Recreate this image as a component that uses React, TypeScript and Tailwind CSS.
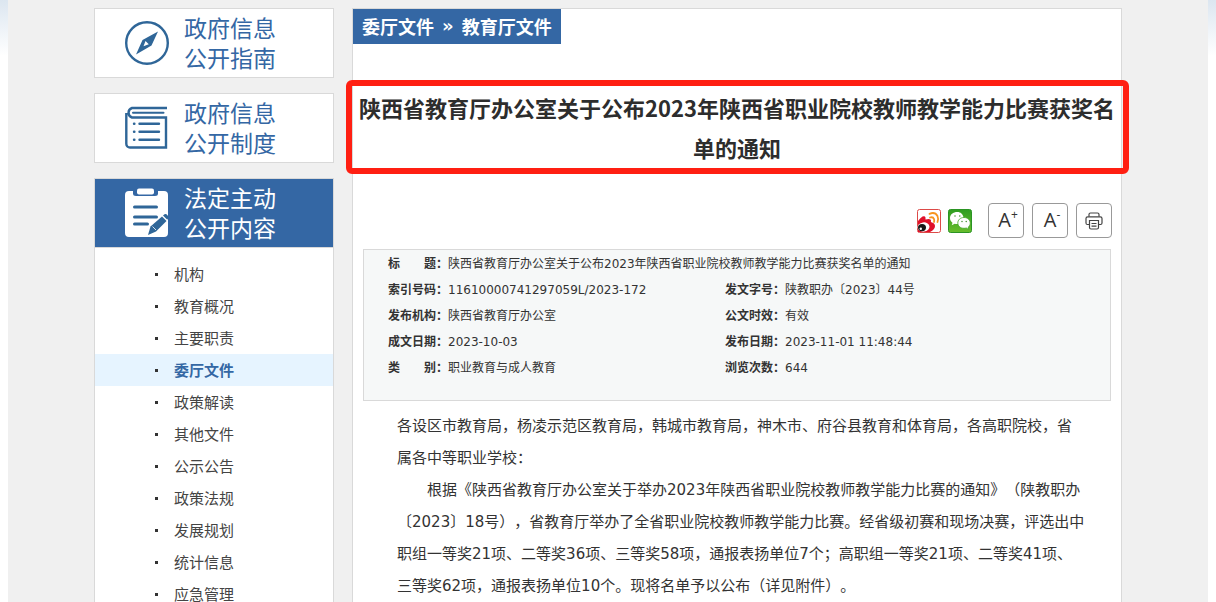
import React from "react";

const menu = [
  "机构",
  "教育概况",
  "主要职责",
  "委厅文件",
  "政策解读",
  "其他文件",
  "公示公告",
  "政策法规",
  "发展规划",
  "统计信息",
  "应急管理",
];
const current = "委厅文件";

function CompassIcon() {
  return (
    <svg viewBox="0 0 44 44" className="size-11" fill="none" aria-hidden="true">
      <circle cx="22" cy="22" r="20.8" stroke="#2f6698" strokeWidth="2.4" />
      <path
        fillRule="evenodd"
        fill="#2f6698"
        d="M33 10.500 26.500 24.500 11 33.500 17.500 19ZM20.500 20 18.500 25.200 23.800 23.200Z"
      />
    </svg>
  );
}

function BookIcon() {
  return (
    <svg viewBox="0 0 44 44" className="size-11" fill="none" stroke="#2f6698" strokeWidth="2.4" aria-hidden="true">
      <path d="M42 2H7A5 5 0 0 0 7 11.500H41V41.500H5A3.800 3.800 0 0 1 1.300 37.700V7" />
      <path d="M8 6.800H38.500" strokeLinecap="round" strokeWidth="2" />
      <path d="M14.500 17.800H34M14.500 25.800H34M14.500 33.800H34" strokeLinecap="round" />
      <path d="M9 17.800H9.400M9 25.800H9.400M9 33.800H9.400" strokeLinecap="round" />
    </svg>
  );
}

function ClipboardIcon() {
  return (
    <svg viewBox="0 0 44 50" className="h-[50px] w-11" aria-hidden="true">
      <path
        fill="#fff"
        d="M4 3H8V5.500Q8 8 11 8H30Q33 8 33 5.500V3H39Q43 3 43 7V45Q43 49 39 49H4Q0 49 0 45V7Q0 3 4 3Z"
      />
      <rect x="12" y="0.500" width="17" height="6" rx="2" fill="#fff" />
      <path d="M9.500 19H31.500M9.500 29H31.500M9.500 36H22.500" stroke="#2f6698" strokeWidth="3" strokeLinecap="round" />
      <path d="M23 47 25.500 38.500 37 28.500 41.500 33 31 43.500Z" fill="#2f6698" />
      <path d="M38 27.500 39.500 26.300Q41 25.600 42.500 27.200T43 30.500L42.300 31.800Z" fill="#2f6698" />
      <path d="M27.500 38.500 31 42" stroke="#fff" strokeWidth="0.800" />
    </svg>
  );
}

function WeiboIcon() {
  return (
    <svg viewBox="0 0 24 24" className="size-6" aria-hidden="true">
      <rect x="0.5" y="0.5" width="23" height="23" rx="2" fill="#fff" stroke="#dc4a48" />
      <path
        d="M1 12Q3 9 5.500 7.500 8 6.500 8.500 8.500L8.500 10.500Q12 9.500 13.500 10.500 14.500 11.500 13.800 13 18 14 18 17 18 20.500 13 23H1Z"
        fill="#e0102a"
      />
      <ellipse cx="6.500" cy="18" rx="6" ry="4.600" fill="#fff" transform="rotate(-8 6.500 18)" />
      <ellipse cx="5" cy="18.600" rx="4" ry="3.600" fill="#181818" />
      <circle cx="3.800" cy="19.800" r="1.200" fill="#fff" />
      <path
        d="M12.500 4.800Q18 2.500 20.500 7 21.800 10 20.500 13M13 8.500Q16 7.500 17 10 17.500 11.500 17 13"
        fill="none"
        stroke="#f7941d"
        strokeWidth="1.800"
        strokeLinecap="round"
      />
    </svg>
  );
}

function WechatIcon() {
  return (
    <svg viewBox="0 0 24 24" className="size-6" aria-hidden="true">
      <defs>
        <linearGradient id="wechatGreen" x1="0" y1="0" x2="0" y2="1">
          <stop offset="0" stopColor="#2f9d22" />
          <stop offset="1" stopColor="#68bd2c" />
        </linearGradient>
      </defs>
      <rect x="0.5" y="0.5" width="23" height="23" rx="2" fill="url(#wechatGreen)" stroke="#2b9424" />
      <path
        d="M9.500 3C5 3 2 5.600 2 9 2 11 3 12.600 4.500 13.700L3.700 16.300 6.700 14.800Q8 15.200 10 15.100L15.500 8.500C15 5.200 12.500 3 9.500 3Z"
        fill="#fff"
      />
      <path
        d="M16 8.500C12.200 8.500 9.800 11 9.800 14 9.800 17 12.400 19.300 16 19.300Q17.200 19.300 18.300 19L20.700 20.500 20.200 18.200C21.600 17.200 22.300 15.700 22.300 14 22.300 11 19.700 8.500 16 8.500Z"
        fill="#fff"
        stroke="#40a626"
        strokeWidth="0.800"
      />
      <g fill="#31851f">
        <circle cx="7" cy="7" r="0.700" />
        <circle cx="11.800" cy="7" r="0.700" />
        <circle cx="14" cy="12.500" r="0.700" />
        <circle cx="18.200" cy="12.500" r="0.700" />
      </g>
    </svg>
  );
}

function PrinterIcon() {
  return (
    <svg viewBox="0 0 18 18" className="size-[18px]" fill="none" stroke="#444" strokeWidth="1.200" aria-hidden="true">
      <path d="M4 4.500V2.500Q4 1 5.500 1H12.500Q14 1 14 2.500V4.500" />
      <path d="M4.500 12.500H2.500Q1 12.500 1 11V6.500Q1 4.800 2.700 4.800H15.300Q17 4.800 17 6.500V11Q17 12.500 15.500 12.500H13.500" />
      <path d="M4.500 8.500H13.500V15.500Q13.500 17 12 17H6Q4.500 17 4.500 15.500Z" />
      <path d="M6.500 11.500H11.500M6.500 14.200H11.500" />
    </svg>
  );
}

type CardProps = { icon: React.ReactNode; lines: [string, string]; active?: boolean };

function SideCard({ icon, lines, active = false }: CardProps) {
  return (
    <a
      href="#"
      className={
        active
          ? "flex h-[70px] items-center gap-[15px] border border-[#d9d9d9] bg-[#3467a4] pl-[30px] text-white"
          : "flex h-[70px] items-center gap-[15px] border border-[#d9d9d9] bg-white pl-[30px] text-[#3467a4]"
      }
    >
      {icon}
      <span className="pb-0.5 text-[23px] leading-[30px]">
        {lines[0]}
        <br />
        {lines[1]}
      </span>
    </a>
  );
}

function Field({ label, value, wide = false }: { label: string; value: string; wide?: boolean }) {
  return (
    <div className={wide ? "col-span-2 flex" : "flex"}>
      <dt className="w-[60px] shrink-0 font-bold whitespace-pre">{label}：</dt>
      <dd>{value}</dd>
    </div>
  );
}

const toolButton =
  "flex h-[35px] w-9 items-center justify-center rounded border border-[#999] bg-white text-xl text-[#333]";

export default function App() {
  return (
    <div className="h-screen overflow-hidden bg-linear-to-b from-[#dce6f0] to-white to-[56px] px-2 font-['Noto_Sans_CJK_SC',sans-serif] text-[#333]">
      <div className="min-h-full bg-[#f0f0f0] pt-2">
        <div className="mx-auto flex max-w-[1028px] items-start gap-[18px]">
          <nav className="w-60 shrink-0">
            <div className="flex flex-col gap-[15px]">
              <SideCard icon={<CompassIcon />} lines={["政府信息", "公开指南"]} />
              <SideCard icon={<BookIcon />} lines={["政府信息", "公开制度"]} />
              <SideCard icon={<ClipboardIcon />} lines={["法定主动", "公开内容"]} active />
            </div>
            <ul className="border-x border-[#d9d9d9] bg-white pt-[10px]">
              {menu.map((item) => (
                <li
                  key={item}
                  className={
                    item === current
                      ? "flex h-8 items-center gap-4 bg-[#e6f4ff] pl-[60px]"
                      : "flex h-8 items-center gap-4 pl-[60px]"
                  }
                >
                  <span className="size-[3px] bg-[#333]" />
                  <a
                    href="#"
                    className={item === current ? "text-[15px] font-bold text-[#3467a4]" : "text-[15px] text-[#444]"}
                  >
                    {item}
                  </a>
                </li>
              ))}
            </ul>
          </nav>

          <main className="min-w-0 flex-1 border border-[#d9d9d9] bg-white pb-10">
            <div className="flex">
              <div className="flex h-[35px] items-center gap-2 bg-[#3467a4] px-[9px] pb-0.5 text-lg font-bold text-white">
                <a href="#">委厅文件</a>
                <span className="font-['DejaVu_Sans',sans-serif]">»</span>
                <a href="#">教育厅文件</a>
              </div>
            </div>

            <div className="relative mt-[43px] px-1">
              <h1 className="text-center text-[22px] leading-10 font-bold text-[#2d2d2d]">
                陕西省教育厅办公室关于公布2023年陕西省职业院校教师教学能力比赛获奖名单的通知
              </h1>
              <div className="pointer-events-none absolute -top-[7px] -right-2 -bottom-[7px] -left-[7px] rounded-md border-6 border-[#ff1f12]" />
            </div>

            <div className="mt-9 flex items-center justify-end gap-2 pr-[9px] font-['Open_Sans',sans-serif]">
              <div className="mr-2 flex gap-[7px]">
                <button type="button" aria-label="分享到微博">
                  <WeiboIcon />
                </button>
                <button type="button" aria-label="分享到微信">
                  <WechatIcon />
                </button>
              </div>
              <button type="button" className={toolButton}>
                <span className="pb-0.5 pl-1">A</span>
                <sup className="text-xs">+</sup>
              </button>
              <button type="button" className={toolButton}>
                <span className="pb-0.5 pl-1">A</span>
                <sup className="text-xs">-</sup>
              </button>
              <button type="button" aria-label="打印" className={toolButton}>
                <PrinterIcon />
              </button>
            </div>

            <dl className="mx-[10px] mt-[11px] grid h-[152px] grid-cols-[337px_1fr] content-start border border-[#d9d9d9] bg-[#f6f8f8] pt-px pl-6 font-['DejaVu_Sans','Noto_Sans_CJK_SC',sans-serif] text-xs leading-[26px]">
              <Field wide label="标　　题" value="陕西省教育厅办公室关于公布2023年陕西省职业院校教师教学能力比赛获奖名单的通知" />
              <Field label="索引号码" value="11610000741297059L/2023-172" />
              <Field label="发文字号" value="陕教职办〔2023〕44号" />
              <Field label="发布机构" value="陕西省教育厅办公室" />
              <Field label="公文时效" value="有效" />
              <Field label="成文日期" value="2023-10-03" />
              <Field label="发布日期" value="2023-11-01 11:48:44" />
              <Field label="类　　别" value="职业教育与成人教育" />
              <Field label="浏览次数" value="644" />
            </dl>

            <article className="mt-[9px] pr-[35px] pl-11 font-['DejaVu_Sans','Noto_Sans_CJK_SC',sans-serif] text-[15px] leading-8 [text-spacing-trim:space-all]">
              <p>
                各设区市教育局，杨凌示范区教育局，韩城市教育局，神木市、府谷县教育和体育局，各高职院校，省属各中等职业学校：
              </p>
              <p className="indent-[2em]">
                根据《陕西省教育厅办公室关于举办2023年陕西省职业院校教师教学能力比赛的通知》（陕教职办〔2023〕18号），省教育厅举办了全省职业院校教师教学能力比赛。经省级初赛和现场决赛，评选出中职组一等奖21项、二等奖36项、三等奖58项，通报表扬单位7个；高职组一等奖21项、二等奖41项、三等奖62项，通报表扬单位10个。现将名单予以公布（详见附件）。
              </p>
            </article>
          </main>
        </div>
      </div>
    </div>
  );
}
